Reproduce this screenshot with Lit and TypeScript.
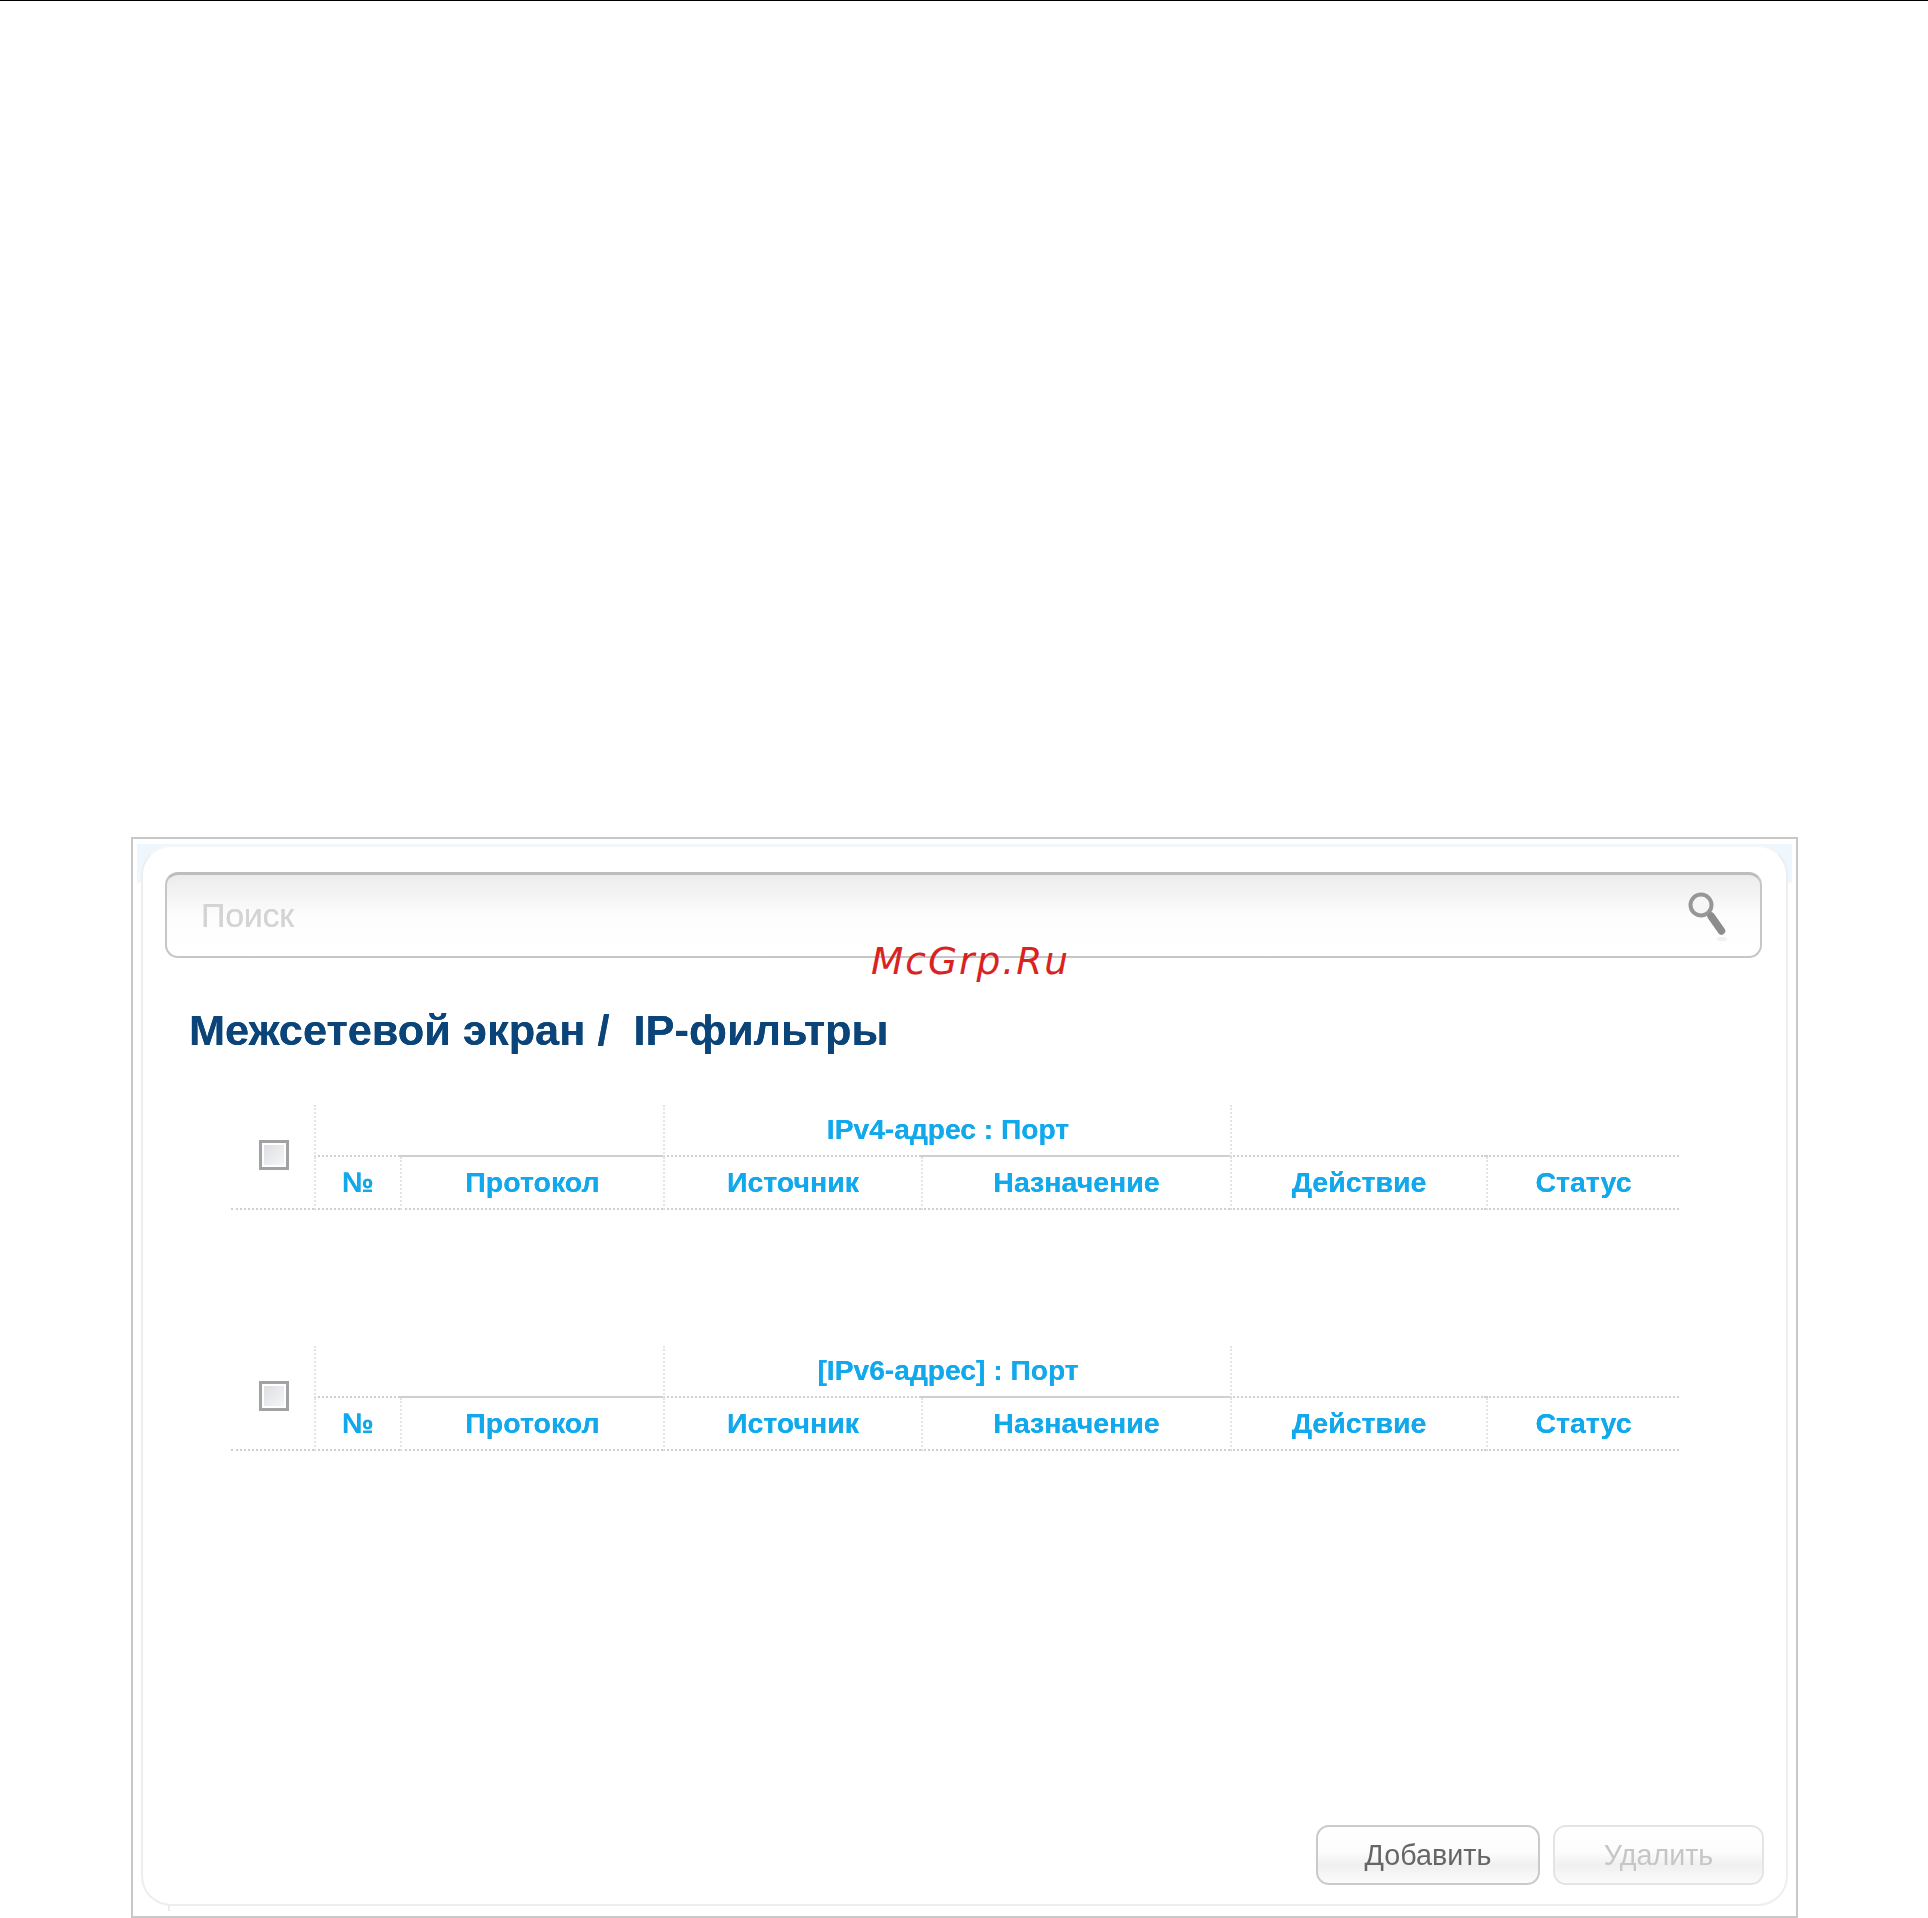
import { LitElement, html, css, svg } from "lit";
import { customElement } from "lit/decorators.js";

const SearchIcon = svg`<svg class="search-icon" width="40" height="54" viewBox="0 0 40 54" aria-hidden="true">
  <ellipse cx="35" cy="50" rx="5" ry="2" fill="#e6e6e6" opacity=".6"/>
  <circle cx="14" cy="16" r="10.5" fill="#f6f6f6" stroke="#979797" stroke-width="4"/>
  <path d="M24 27 L34.5 42" stroke="#8c8c8c" stroke-width="7.5" stroke-linecap="round"/>
</svg>`;

function tableBlock(address: string) {
  return html`<div class="grid">
    <div class="check-cell"><span class="check"></span></div>
    <div class="top c2 left"></div>
    <div class="top c3 solid"></div>
    <div class="top c4 left"></div>
    <div class="top c5 solid"></div>
    <div class="top c6 left"></div>
    <div class="top c7"></div>
    <div class="group">${address}</div>
    <div class="head left">№</div>
    <div class="head left">Протокол</div>
    <div class="head left">Источник</div>
    <div class="head left">Назначение</div>
    <div class="head left">Действие</div>
    <div class="head left">Статус</div>
  </div>`;
}

@customElement("app-root")
export class AppRoot extends LitElement {
  static styles = css`
    :host {
      display: block;
      position: relative;
      width: 1928px;
      height: 1918px;
      background: #fff;
      overflow: hidden;
      font-family: "Liberation Sans", Arial, sans-serif;
    }
    .rule {
      height: 1px;
      background: #000;
      margin-bottom: 836px;
    }
    .frame {
      box-sizing: border-box;
      width: 1667px;
      height: 1081px;
      margin-left: 131px;
      border: 2px solid #c8c8c8;
      padding: 5px 4px 0 4px;
      filter: blur(0.45px);
    }
    .tint {
      position: relative;
      box-sizing: border-box;
      height: 1067px;
      padding: 1px 4px 0 4px;
      background: linear-gradient(#eef7fd 0, #eef7fd 38px, #fff 40px);
    }
    .panel {
      box-sizing: border-box;
      height: 1061px;
      display: flex;
      flex-direction: column;
      padding: 25px 24px 19px 22px;
      background: #fff;
      border: 2px solid #eeeeee;
      border-top-color: #f6f6f6;
      border-radius: 30px;
    }
    .tick {
      position: absolute;
      left: 31px;
      bottom: 0;
      width: 2px;
      height: 6px;
      background: #ececec;
    }
    .search {
      box-sizing: border-box;
      height: 86px;
      flex: none;
      display: flex;
      align-items: center;
      justify-content: space-between;
      padding: 0 33px 0 34px;
      border: 2px solid #c6c6c6;
      border-top: 3px solid #bdbdbd;
      border-radius: 13px;
      background: linear-gradient(#ececec, #fdfdfd 52%, #fff);
    }
    .placeholder {
      font-size: 34px;
      letter-spacing: -0.3px;
      color: #d4d4d4;
      text-shadow: 0 0 0.6px #d4d4d4;
    }
    h1 {
      margin: 47px 0 0 24px;
      font-size: 43.35px;
      line-height: 50px;
      font-weight: 700;
      color: #0a4478;
      white-space: pre;
      text-shadow: 0 0 0.6px #0a4478;
    }
    .grid {
      display: grid;
      grid-template-columns: 83px 86px 263px 258px 309px 256px 193px;
      grid-template-rows: 52px 53px;
      width: 1448px;
      margin-left: 66px;
      flex: none;
    }
    .first { margin-top: 50px; }
    .second { margin-top: 136px; }
    .check-cell {
      grid-column: 1;
      grid-row: 1 / span 2;
      display: flex;
      align-items: center;
      justify-content: center;
      box-sizing: border-box;
      padding: 0 0 3px 2px;
      border-bottom: 2px dotted #cfcfcf;
    }
    .check {
      box-sizing: border-box;
      width: 30px;
      height: 30px;
      border: 3px solid #a2a2a2;
      outline: 2px solid #fff;
      outline-offset: -5px;
      background: linear-gradient(135deg, #d9dce1, #f8f8f8);
    }
    .top { grid-row: 1; box-sizing: border-box; border-bottom: 2px dotted #cfcfcf; }
    .c2 { grid-column: 2; }
    .c3 { grid-column: 3; }
    .c4 { grid-column: 4; }
    .c5 { grid-column: 5; }
    .c6 { grid-column: 6; }
    .c7 { grid-column: 7; }
    .solid { border-bottom: 2px solid #cfcfcf; }
    .left { border-left: 2px dotted #e4e4e4; }
    .group {
      grid-column: 4 / span 2;
      grid-row: 1;
      display: flex;
      align-items: center;
      justify-content: center;
      padding: 0 0 3px 3px;
      font-size: 28.2px;
      font-weight: 700;
      color: #12a9ec;
      white-space: pre;
      text-shadow: 0 0 0.5px #12a9ec;
    }
    .head {
      grid-row: 2;
      box-sizing: border-box;
      display: flex;
      align-items: center;
      justify-content: center;
      font-size: 28.5px;
      font-weight: 700;
      color: #12a9ec;
      border-bottom: 2px dotted #cfcfcf;
      text-shadow: 0 0 0.5px #12a9ec;
    }
    .actions {
      margin-top: auto;
      margin-right: -2px;
      display: flex;
      justify-content: flex-end;
      gap: 13px;
    }
    .btn {
      box-sizing: border-box;
      height: 60px;
      display: flex;
      align-items: center;
      justify-content: center;
      border: 2px solid #cacaca;
      border-radius: 13px;
      font-size: 28.7px;
      color: #666;
      background: linear-gradient(#fff, #fcfcfc 45%, #f0f0f0 68%, #fbfbfb);
    }
    .add { width: 224px; }
    .del { width: 211px; color: #c6c6c6; border-color: #e4e4e4; }
    .mark {
      position: absolute;
      left: 871px;
      top: 939px;
      font-family: "DejaVu Sans", sans-serif;
      font-style: italic;
      font-size: 37.5px;
      line-height: 44px;
      letter-spacing: 2px;
      color: #d92323;
    }
  `;

  render() {
    return html`
      <div class="rule"></div>
      <div class="frame">
        <div class="tint">
          <div class="panel">
            <div class="search">
              <span class="placeholder">Поиск</span>
              ${SearchIcon}
            </div>
            <h1>Межсетевой экран /  IP-фильтры</h1>
            <div class="first">${tableBlock("IPv4-адрес : Порт")}</div>
            <div class="second">${tableBlock("[IPv6-адрес] : Порт")}</div>
            <div class="actions">
              <div class="btn add">Добавить</div>
              <div class="btn del">Удалить</div>
            </div>
          </div>
          <div class="tick"></div>
        </div>
      </div>
      <div class="mark">McGrp.Ru</div>
    `;
  }
}
